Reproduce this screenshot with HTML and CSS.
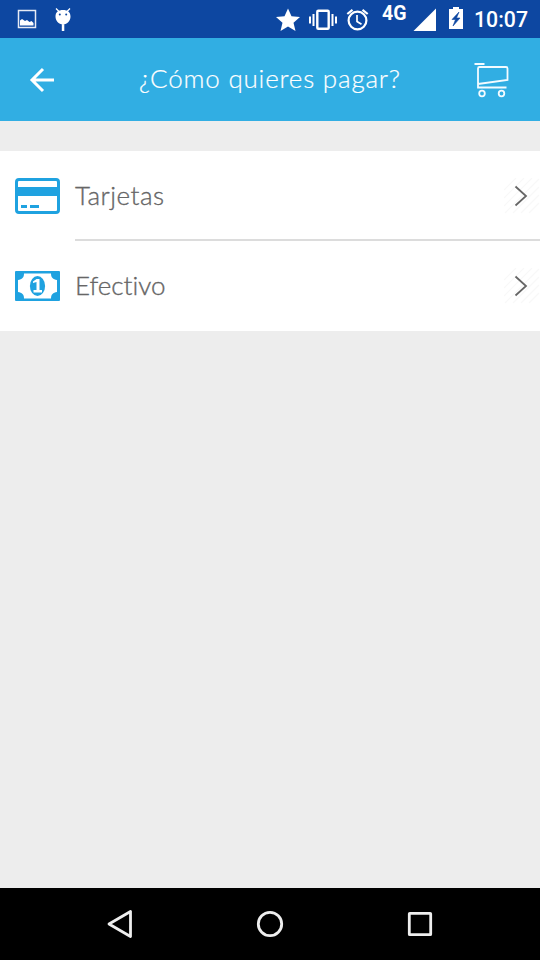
FILE: index.html
```html
<!DOCTYPE html>
<html lang="es">
<head>
<meta charset="utf-8">
<title>¿Cómo quieres pagar?</title>
<link rel="stylesheet" href="styles.css">
</head>
<body>
<div class="screen">
  <header class="status">
    <svg class="status-left" width="56" height="38" viewBox="17 0 56 38">
      <rect x="18.500" y="10.500" width="17" height="17" fill="none" stroke="#e7ebf5" stroke-width="1.500"/>
      <path d="M20 25.500v-5l2-1.500 3 2 2-1 2.500 2 2-1 2 2v2.500z" fill="#fff"/>
      <path d="M55.500 16.500c0-4.500 3-6.500 7.500-6.500s7.500 2 7.500 6.500c0 4-3 8-7.500 8s-7.500-4-7.500-8zM61.800 24.500h2.500v6.500h-2.500z" fill="#fff"/>
      <path d="M56 8.500l3.500 3.500M70 8.500L66.500 12" stroke="#fff" stroke-width="1.300"/>
      <circle cx="59.800" cy="14.500" r="1" fill="#0d47a1"/><circle cx="66.200" cy="14.500" r="1" fill="#0d47a1"/>
    </svg>
    <svg width="96" height="38" viewBox="275 0 96 38">
      <path d="M288 8.500l3.500 7.800 8.500.8-6.500 5.600 2 8.300-7.500-4.400-7.500 4.400 2-8.300-6.500-5.600 8.500-.8z" fill="#fff"/>
      <rect x="317.300" y="10.700" width="11.400" height="18" rx="1" fill="none" stroke="#fff" stroke-width="2.400"/>
      <path d="M313.500 14v12M310 16.500v7M332.500 14v12M336 16.500v7" stroke="#fff" stroke-width="2"/>
      <circle cx="357.500" cy="20.500" r="8.900" fill="none" stroke="#fff" stroke-width="2.200"/>
      <path d="M357 15v6.500l4.500 2.800" fill="none" stroke="#fff" stroke-width="1.700"/>
      <path d="M347.300 14l5.200-4.200M362.500 9.800l5.200 4.200" stroke="#fff" stroke-width="2.200"/>
    </svg>
    <span class="network">4G</span>
    <svg width="52" height="38" viewBox="413 0 52 38">
      <path d="M413.500 31L436 8.500V31z" fill="#fff"/>
      <path d="M449 9h4V7h6v2h4v20h-14z" fill="#fff"/>
      <path d="M459 12l-7 7.500h3.500l-2.500 6.500 7-8h-3.500z" fill="#0d47a1" stroke="#0d47a1" stroke-width=".6"/>
    </svg>
    <span class="clock">10:07</span>
  </header>
  <nav class="toolbar">
    <svg width="28" height="28" viewBox="28 66 28 28"><path d="M54 80H32M43 69L32 80l11 11" fill="none" stroke="#fff" stroke-width="3"/></svg>
    <h1>¿Cómo quieres pagar?</h1>
    <svg width="36" height="36" viewBox="474.500 61.500 36 36" fill="none" stroke="#f4fbff">
      <path d="M475 63.500h10" stroke-width="2"/>
      <path d="M507 87H478.500V68q0-1.500 1.500-1.500h26.500q1.500 0 1.500 1.500v11.500L478.500 83.500" stroke-width="1.800"/>
      <circle cx="482.500" cy="93" r="2.800" stroke-width="1.800"/><circle cx="502" cy="93" r="2.800" stroke-width="1.800"/>
    </svg>
  </nav>
  <main class="options">
    <a class="option">
      <svg class="icon" width="45" height="36" viewBox="0 0 45 36">
        <rect x="1.500" y="1.500" width="42" height="33" rx="2.500" fill="#fff" stroke="#1fa2e0" stroke-width="3"/>
        <path d="M1 9h43v9H1zM6 27h6v3H6zM15 27h9v3h-9z" fill="#1fa2e0"/>
      </svg>
      <span class="label cards">Tarjetas</span>
      <svg class="chevron" width="36" height="36" viewBox="504 178 36 36"><use href="#hatch"/><path d="M515.500 186.500l10.500 9.500-10.500 9.500" fill="none" stroke="#666" stroke-width="1.800"/></svg>
    </a>
    <a class="option">
      <svg class="icon" width="45" height="30" viewBox="0 0 45 30">
        <rect width="45" height="30" rx="1" fill="#1fa2e0"/>
        <path d="M9 2.500h27c0 4 2 6 6 6.500v12c-4 .5-6 2.500-6 6.500H9c0-4-2-6-6-6.500V9C7 8.500 9 6.500 9 2.500z" fill="#fff"/>
        <ellipse cx="22.500" cy="15" rx="7.600" ry="10" fill="#1fa2e0"/>
        <path d="M18 10.500l3.500-2.500h3v11H27v2.500h-8.500V19h3v-8L18 12z" fill="#fff"/>
      </svg>
      <span class="label cash">Efectivo</span>
      <svg class="chevron" width="36" height="36" viewBox="504 178 36 36"><use href="#hatch"/><path d="M515.500 186.500l10.500 9.500-10.500 9.500" fill="none" stroke="#666" stroke-width="1.800"/></svg>
    </a>
  </main>
  <footer class="keys">
    <svg width="28" height="30" viewBox="106 909 28 30"><path d="M109 924l21.500-12.500v25z"/></svg>
    <svg width="28" height="28" viewBox="256 910 28 28"><circle cx="270" cy="924" r="11.700"/></svg>
    <svg width="28" height="28" viewBox="406 910 28 28"><rect x="409.300" y="913.300" width="21.400" height="21.400" rx=".5"/></svg>
  </footer>
</div>
<svg class="defs" width="0" height="0"><defs>
  <path id="hatch" d="M504 190l12-12M504 198l20-20M504 206l28-28M505 213l34-34M513 213l26-26M521 213l18-18M529 213l10-10" stroke="#f8f8f8" stroke-width="1.200"/>
</defs></svg>
</body>
</html>
```
FILE: styles.css
```css
* { box-sizing: border-box; }
body { margin: 0; }
svg { display: block; flex: none; }
.defs { position: absolute; }
.screen { width: 540px; height: 960px; display: flex; flex-direction: column; background: #ededed; overflow: hidden; font-family: Lato, sans-serif; }
.status { height: 38px; flex: none; display: flex; background: #0d47a1; color: #fff; padding-left: 17px; font-family: Roboto, sans-serif; white-space: nowrap; }
.status-left { margin-right: 202px; }
.network { width: 42px; padding-left: 11px; font-size: 19.500px; font-weight: 700; line-height: 28px; }
.clock { padding-left: 9px; font-size: 21.300px; font-weight: 500; line-height: 40px; }
.toolbar { height: 83px; flex: none; display: flex; align-items: center; justify-content: space-between; padding: 0 30px 0 28px; background: #31aee3; color: #fff; }
.toolbar h1 { margin: 0 0 4px 10px; width: 262px; font-size: 26px; font-weight: 300; line-height: 32px; letter-spacing: .8px; white-space: nowrap; -webkit-text-stroke: .2px; }
.options { margin-top: 30px; background: #fff; }
.option { height: 90px; display: flex; align-items: center; padding-left: 15px; }
.label { flex: 1; height: 90px; margin-left: 15px; line-height: 88px; font-size: 26px; font-weight: 300; color: #666; font-variant-ligatures: none; -webkit-text-stroke: .35px; }
.cards { position: relative; letter-spacing: .5px; }
.cards::after { content: ""; position: absolute; left: 0; bottom: 0; width: 465px; height: 2px; background: #dcdcdc; }
.keys { height: 72px; margin-top: auto; display: flex; align-items: center; justify-content: space-between; padding: 0 106px; background: #000; }
.keys svg { fill: none; stroke: #eee; stroke-width: 2.800; stroke-linejoin: round; }
```
